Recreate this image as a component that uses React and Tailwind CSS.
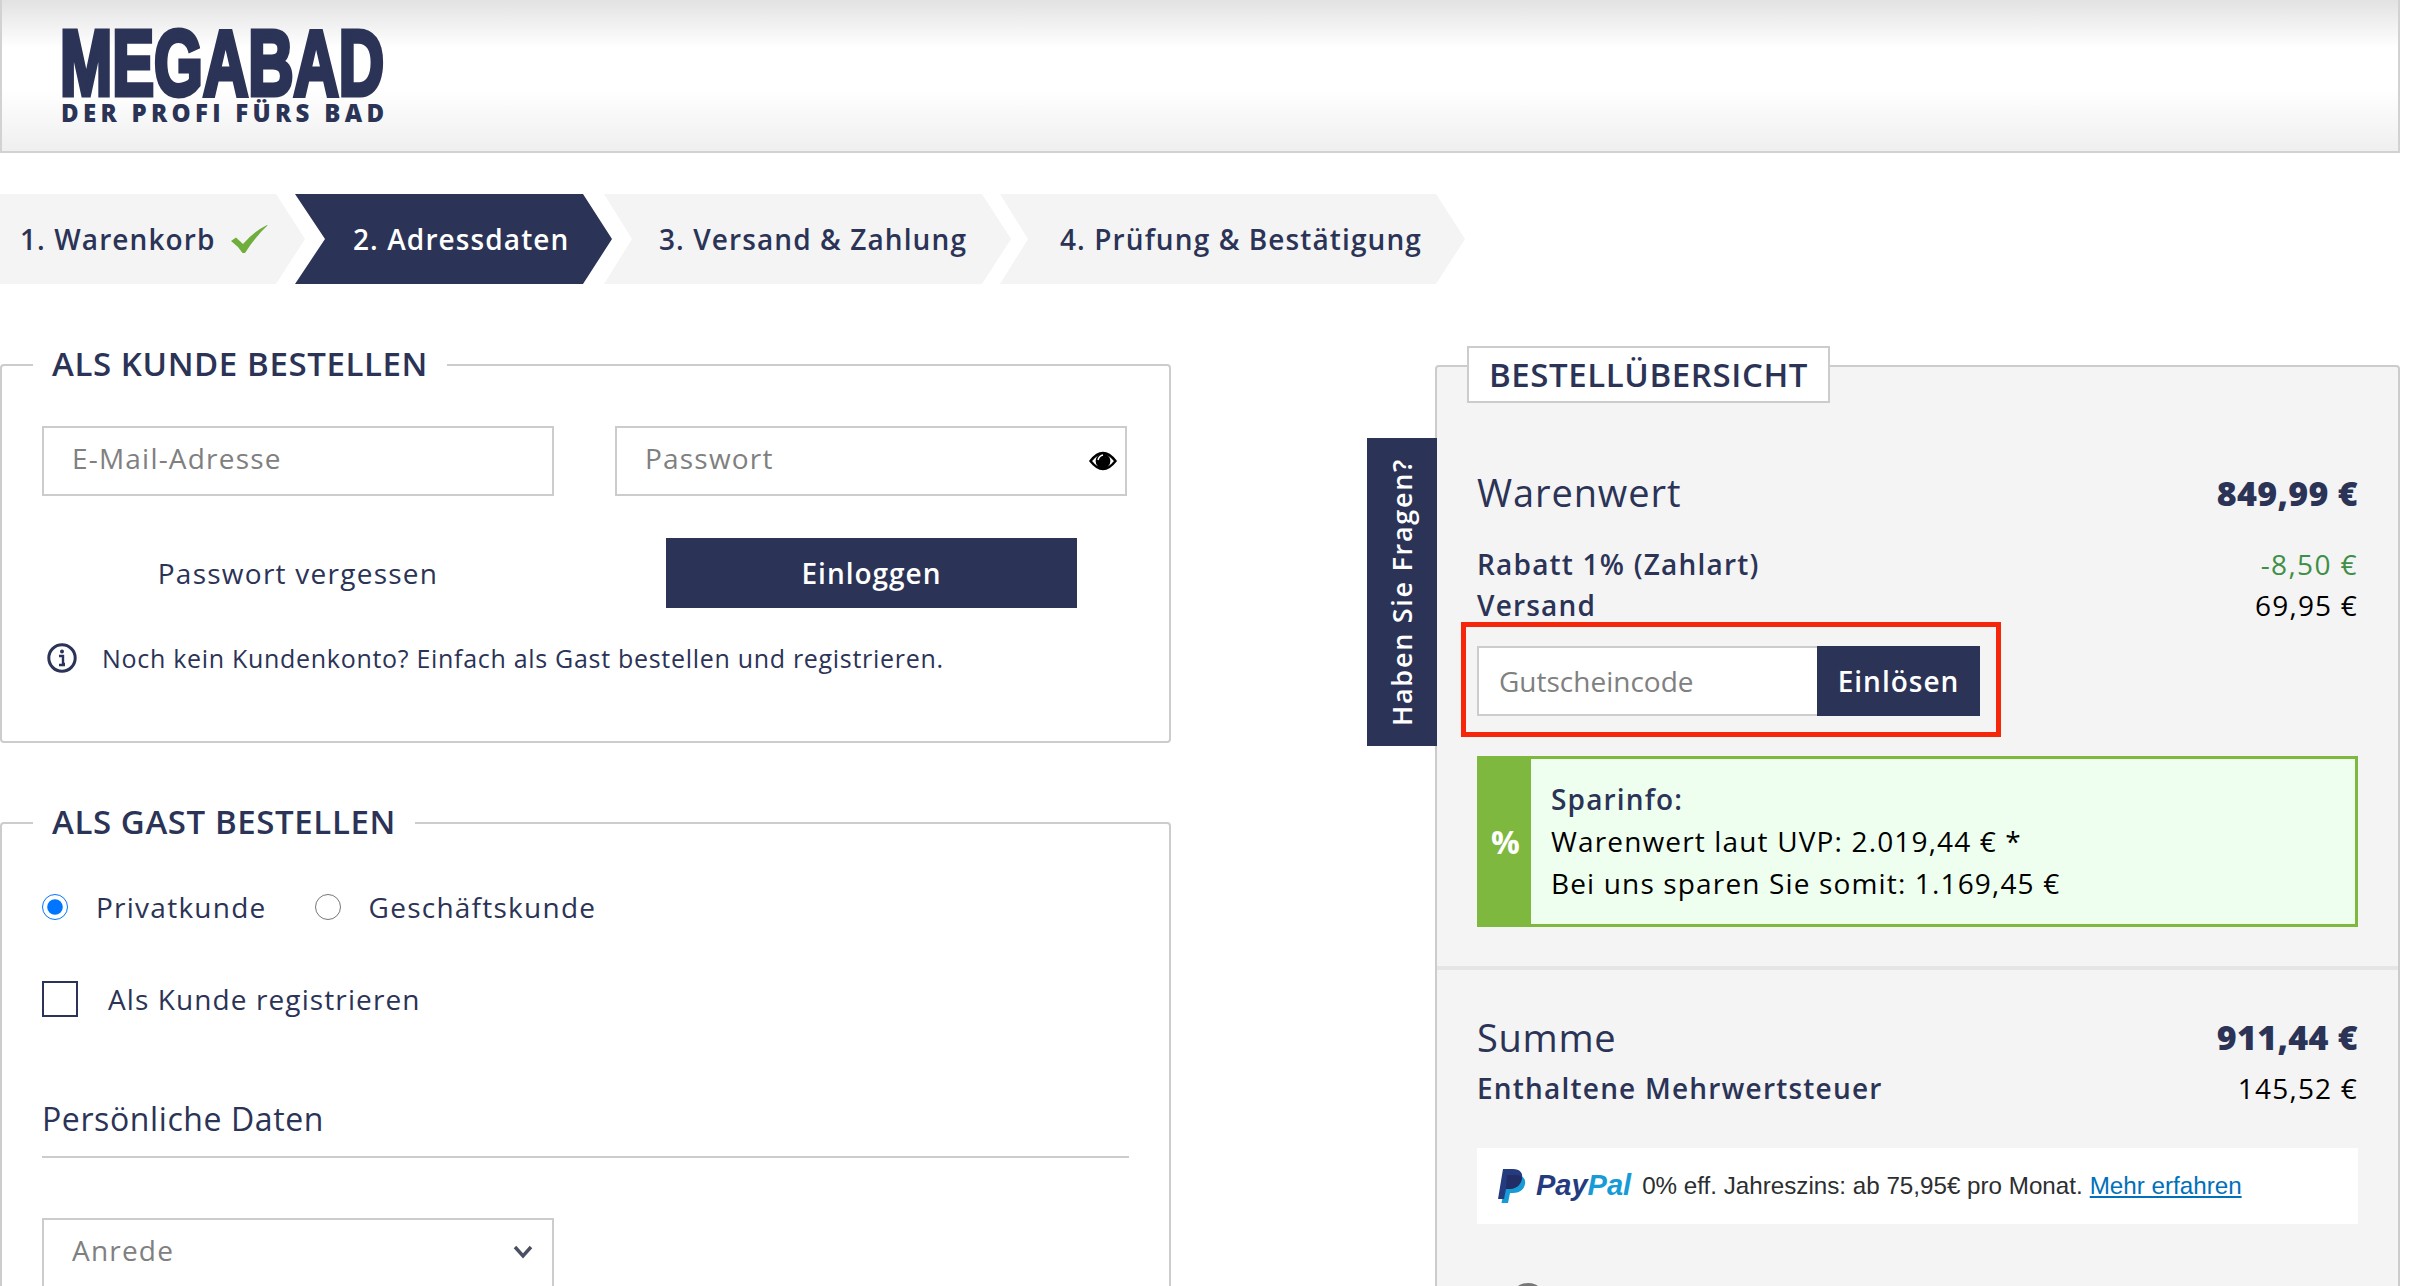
const navy = "text-[#2b3356]";

function Check() {
  return (
    <svg width="37" height="28" viewBox="0 0 37 28" className="ml-[15px]">
      <path d="M0 16 L5 12.5 L12 19 Q22 7 36 0 L36.5 .5 Q24 12 14 28 L11.5 28 Q7 21 0 16 Z" fill="#6fae3c" />
    </svg>
  );
}

function Eye() {
  return (
    <svg width="28" height="20" viewBox="0 0 28 20" className="absolute right-[10px] top-[25px]">
      <path d="M1.5 10 Q14 -6 26.5 10 Q14 26 1.5 10 Z" fill="#fff" stroke="#000" strokeWidth="2.4" />
      <circle cx="14" cy="10" r="7.4" fill="#000" />
      <path d="M9 9 Q10 5 14 4" fill="none" stroke="#fff" strokeWidth="1.5" />
    </svg>
  );
}

function Info() {
  return (
    <svg width="30" height="30" viewBox="0 0 30 30" className="shrink-0">
      <circle cx="15" cy="15" r="13.2" fill="none" stroke="#2b3356" strokeWidth="3" />
      <circle cx="15" cy="8.5" r="2" fill="#2b3356" />
      <path d="M12 13 H16 V21 H18 M12 22 H18" fill="none" stroke="#2b3356" strokeWidth="2.4" />
    </svg>
  );
}

function PayPalMark() {
  return (
    <svg width="28" height="34" viewBox="0 0 28 34">
      <path d="M9 6 H18 C25 6 28 10 27 15 C26 21 21 24 15 24 H12 L10 34 H3.5 Z" fill="#179bd7" />
      <path d="M5 0 H15 C22 0 25 4 24 9 C23 16 18 20 11 20 H8 L6 30 H0 Z" fill="#253b80" />
      <path d="M9 6 H18 C21 6 23 7 24 9 C23 16 18 20 11 20 H8 Z" fill="#222d65" />
    </svg>
  );
}

function TextInput({ placeholder, children }) {
  return (
    <div className="relative h-[70px]">
      <input
        placeholder={placeholder}
        className="h-full w-full border-2 border-[#ccc] bg-white pb-[6px] pl-[28px] text-[28px] tracking-[1.2px] outline-none placeholder:text-[#808080]"
      />
      {children}
    </div>
  );
}

function Row({ label, value, labelClass, valueClass, className }) {
  return (
    <div className={"flex items-center justify-between " + className}>
      <span className={labelClass}>{label}</span>
      <span className={valueClass}>{value}</span>
    </div>
  );
}

export default function App() {
  return (
    <div className="h-[1286px] w-[2410px] overflow-hidden bg-white font-['Open_Sans',sans-serif]">
      <header className="h-[153px] w-[2400px] border-b-2 border-l-2 border-r-2 border-[#d2d2d2] bg-[linear-gradient(#e2e2e2_0,#ffffff_48px,#ffffff_90px,#efefef_100%)] pl-[59px] pt-[25px]">
        <div className={"-ml-[1px] h-[76px] w-[322px] font-['Liberation_Sans',sans-serif] text-[92px] leading-[76px] font-bold whitespace-nowrap [-webkit-text-stroke:5px_#2b3356] origin-left scale-x-[0.682] " + navy}>
          MEGABAD
        </div>
        <div className={"text-[24px] leading-[24px] font-extrabold tracking-[4.3px] whitespace-nowrap " + navy}>DER PROFI FÜRS BAD</div>
      </header>

      <nav className={"mt-[41px] flex h-[90px] text-[28px] font-semibold tracking-[1.1px] " + navy}>
        <div className="flex w-[305px] items-center bg-[#f4f4f4] pl-[20px] [clip-path:polygon(0_0,276px_0,100%_50%,276px_100%,0_100%)]">
          1. Warenkorb <Check />
        </div>
        <div className="-ml-[10px] flex w-[317px] items-center bg-[#2b3356] pl-[58px] text-white [clip-path:polygon(0_0,288px_0,100%_50%,288px_100%,0_100%,30px_50%)]">
          2. Adressdaten
        </div>
        <div className="-ml-[8px] flex w-[407px] items-center bg-[#f4f4f4] pl-[55px] [clip-path:polygon(0_0,378px_0,100%_50%,378px_100%,0_100%,28px_50%)]">
          3. Versand &amp; Zahlung
        </div>
        <div className="-ml-[11px] flex w-[465px] items-center bg-[#f4f4f4] pl-[60px] [clip-path:polygon(0_0,436px_0,100%_50%,436px_100%,0_100%,28px_50%)]">
          4. Prüfung &amp; Bestätigung
        </div>
      </nav>

      <main className="mt-[59px] flex items-start">
        <div className="w-[1171px] shrink-0">
          <fieldset className="rounded-[4px] border-2 border-[#ccc] px-[40px] pb-[68px]">
            <legend className={"-ml-[9px] px-[19px] pb-[2px] text-[33px] leading-[42px] font-semibold tracking-[0.6px] " + navy}>ALS KUNDE BESTELLEN</legend>
            <div className="grid grid-cols-[512px_512px] gap-x-[61px] pt-[39px]">
              <TextInput placeholder="E-Mail-Adresse" />
              <TextInput placeholder="Passwort">
                <Eye />
              </TextInput>
              <div className={"mt-[42px] flex h-[70px] items-center justify-center text-[28px] tracking-[1.25px] " + navy}>Passwort vergessen</div>
              <div className="mt-[42px] px-[51px]">
                <button className="h-[70px] w-[411px] bg-[#2b3356] text-[28px] font-semibold tracking-[1px] text-white">Einloggen</button>
              </div>
            </div>
            <div className={"mt-[35px] flex h-[30px] items-center gap-[25px] pl-[5px] text-[25px] tracking-[0.7px] " + navy}>
              <Info />
              <span className="pt-[2px]">Noch kein Kundenkonto? Einfach als Gast bestellen und registrieren.</span>
            </div>
          </fieldset>

          <fieldset className="mt-[58px] h-[600px] rounded-[4px] border-2 border-[#ccc] px-[40px]">
            <legend className={"-ml-[9px] px-[19px] pb-[2px] text-[33px] leading-[42px] font-semibold tracking-[0.6px] " + navy}>ALS GAST BESTELLEN</legend>
            <div className={"mt-[49px] flex h-[26px] items-center text-[28px] tracking-[1.25px] " + navy}>
              <input type="radio" name="kind" defaultChecked className="m-0 h-[26px] w-[26px] accent-[#0075ff]" />
              <span className="ml-[28px]">Privatkunde</span>
              <input type="radio" name="kind" className="m-0 ml-[48px] h-[26px] w-[26px] accent-[#0075ff]" />
              <span className="ml-[28px]">Geschäftskunde</span>
            </div>
            <div className={"mt-[61px] flex h-[36px] items-center gap-[30px] text-[28px] tracking-[1.1px] " + navy}>
              <input type="checkbox" className="m-0 h-[36px] w-[36px] appearance-none border-2 border-[#2b3356] bg-white" />
              Als Kunde registrieren
            </div>
            <h2 className={"mt-[80px] border-b-2 border-[#ccc] pb-[15px] text-[32px] leading-[44px] tracking-[0.6px] " + navy}>Persönliche Daten</h2>
            <div className="relative mt-[60px] h-[70px] w-[512px]">
              <select className="h-full w-full appearance-none border-2 border-[#ccc] bg-white pb-[6px] pl-[28px] text-[28px] tracking-[1.2px] text-[#808080] outline-none">
                <option>Anrede</option>
              </select>
              <svg width="20" height="14" viewBox="0 0 20 14" className="absolute right-[21px] top-[27px]">
                <path d="M2 2 L10 11 L18 2" fill="none" stroke="#4a5060" strokeWidth="3.4" />
              </svg>
            </div>
          </fieldset>
        </div>

        <aside className="relative ml-[264px] mt-[22px] w-[965px] rounded-[4px] border-2 border-[#ccc] bg-[#f4f4f4]">
          <div className="absolute -left-[70px] top-[71px] flex h-[308px] w-[70px] items-center justify-center bg-[#2b3356] text-[27px] font-semibold tracking-[1.7px] text-white">
            <span className="rotate-180 whitespace-nowrap [writing-mode:vertical-rl]">Haben Sie Fragen?</span>
          </div>

          <section className="border-b-4 border-[#e5e5e5] px-[40px] pb-[39px]">
            <div className={"-mt-[21px] -ml-[10px] flex h-[57px] w-[363px] items-center justify-center border-2 border-[#ccc] bg-white text-[33px] font-semibold tracking-[0.6px] " + navy}>
              BESTELLÜBERSICHT
            </div>
            <Row
              className="mt-[70px] h-[44px]"
              label="Warenwert"
              labelClass={"pb-[5px] text-[38px] font-medium tracking-[0.9px] " + navy}
              value="849,99 €"
              valueClass={"pb-[3px] text-[34px] font-extrabold tracking-[0.3px] " + navy}
            />
            <Row
              className="mt-[26px] h-[42px]"
              label="Rabatt 1% (Zahlart)"
              labelClass={"text-[28px] font-semibold tracking-[1.2px] " + navy}
              value="-8,50 €"
              valueClass="text-[28px] font-medium tracking-[1.4px] text-[#3f8f46]"
            />
            <Row
              className="-mt-[1px] h-[42px]"
              label="Versand"
              labelClass={"text-[28px] font-semibold tracking-[1.2px] " + navy}
              value="69,95 €"
              valueClass="text-[28px] tracking-[1.2px] text-black"
            />
            <div className="-mx-[16px] -mt-[4px] flex w-[540px] border-[5px] border-[#f5260a] pb-[16px] pl-[11px] pr-[16px] pt-[19px]">
              <input
                placeholder="Gutscheincode"
                className="h-[70px] w-[340px] border-2 border-r-0 border-[#ccc] bg-white pl-[20px] text-[28px] outline-none placeholder:text-[#808080]"
              />
              <button className="h-[70px] w-[163px] bg-[#2b3356] text-[28px] font-semibold tracking-[1px] text-white">Einlösen</button>
            </div>
            <div className="mt-[19px] flex h-[171px] border-[3px] border-[#7fb83f] bg-[#efffef]">
              <div className="flex w-[51px] items-center justify-center bg-[#7fb83f] text-[32px] font-bold text-white">%</div>
              <div className="pl-[20px] pt-[19px] text-[28px] leading-[42px] tracking-[1.15px] text-black">
                <div className={"font-semibold " + navy}>Sparinfo:</div>
                <div>Warenwert laut UVP: 2.019,44 € *</div>
                <div>Bei uns sparen Sie somit: 1.169,45 €</div>
              </div>
            </div>
          </section>

          <section className="px-[40px] pt-[46px]">
            <Row
              className="h-[46px]"
              label="Summe"
              labelClass={"pb-[3px] text-[38px] font-medium tracking-[0.7px] " + navy}
              value="911,44 €"
              valueClass={"pb-[3px] text-[34px] font-extrabold tracking-[0.3px] " + navy}
            />
            <Row
              className="mt-[5px] h-[42px]"
              label="Enthaltene Mehrwertsteuer"
              labelClass={"text-[28px] font-semibold tracking-[1.2px] " + navy}
              value="145,52 €"
              valueClass="text-[28px] tracking-[1.2px] text-black"
            />
            <div className="mt-[39px] flex h-[76px] items-center bg-white pl-[21px] font-['Liberation_Sans',sans-serif] text-[24.2px] text-[#2c2e2f]">
              <PayPalMark />
              <span className="ml-[10px] text-[29px] font-bold italic text-[#253b80]">
                Pay<span className="text-[#179bd7]">Pal</span>
              </span>
              <span className="ml-[11px]">0% eff. Jahreszins: ab 75,95€ pro Monat.</span>
              <a href="#" className="ml-[7px] text-[#0070ba] underline">Mehr erfahren</a>
            </div>
            <div className="ml-[33px] mt-[59px] h-[40px] w-[36px] rounded-full bg-[#777]" />
          </section>
        </aside>
      </main>
    </div>
  );
}
